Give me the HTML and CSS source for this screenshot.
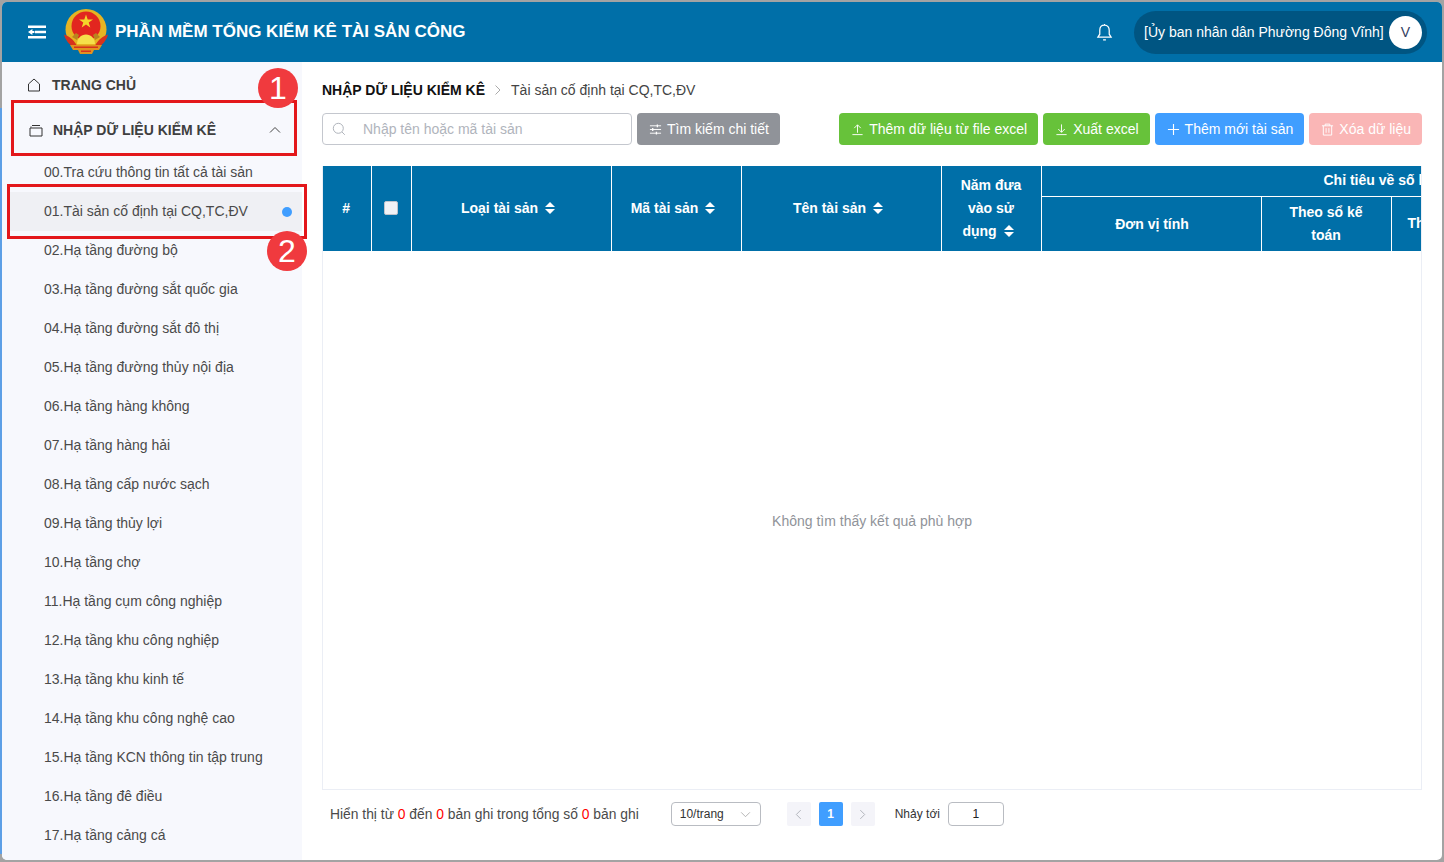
FILE: index.html
```html
<!DOCTYPE html>
<html lang="vi">
<head>
<meta charset="utf-8">
<title>Phần mềm tổng kiểm kê tài sản công</title>
<link rel="stylesheet" href="styles.css">
</head>
<body>
<div class="frame">
  <header class="topbar">
    <svg class="menu-icon" viewBox="0 0 20 16" width="20" height="16"><path d="M1 1.500h18v2.400H1zM8 6.800h11v2.400H8zM1 12.100h18v2.400H1z" fill="#fff"/><path d="M1 8l4.400-3v2h2v2h-2v2z" fill="#fff"/></svg>
    <svg class="emblem" viewBox="0 0 46 46" width="46" height="46">
      <circle cx="23" cy="20.500" r="20.500" fill="#e6b422"/>
      <circle cx="23" cy="17" r="14.500" fill="#e2261f"/>
      <path d="M23 5.500l1.700 5h5.300l-4.300 3.100 1.600 5-4.300-3.100-4.300 3.100 1.600-5-4.300-3.100h5.300z" fill="#f4d52a"/>
      <path d="M1 25.500c5 1.500 9 4.500 13 11l-2 2.500C6.500 36 2.500 31.500 1 25.500zM45 25.500c-5 1.500-9 4.500-13 11l2 2.500c5.500-3 9.500-7.500 11-13.500z" fill="#d8321c"/>
      <path d="M9 28l4-4 3 2-2 5zM37 28l-4-4-3 2 2 5z" fill="#b9851f"/>
      <path d="M14 35c0-5.500 4-9.500 9-9.500s9 4 9 9.500z" fill="#f5e04a"/>
      <path d="M7 36h32l-3 5h-5l-2 4H17l-2-4h-5z" fill="#e0931f"/>
      <path d="M11 37.500h24v1.600H11zM18 41.500h10v1.400H18z" fill="#d8321c"/>
    </svg>
    <div class="brand">PHẦN MỀM TỔNG KIỂM KÊ TÀI SẢN CÔNG</div>
    <svg class="bell" viewBox="0 0 18 20" width="17" height="19"><path d="M9 2.200c-3.300 0-5 2.500-5 5.300v4.300L2 15h14l-2-3.200V7.500c0-2.800-1.700-5.300-5-5.300zM9 1v1.200M7.500 17.800h3" fill="none" stroke="#fff" stroke-width="1.300"/></svg>
    <div class="user-pill">
      <span class="user-name">[Ủy ban nhân dân Phường Đông Vĩnh]</span>
      <span class="avatar">V</span>
    </div>
  </header>

  <div class="body-row">
    <aside class="sidebar">
      <div class="nav-top">
        <svg viewBox="0 0 14 14" width="14" height="14"><path d="M1.500 13V6L7 1l5.500 5v7z" fill="none" stroke="#333" stroke-width="1"/></svg>
        <span>TRANG CHỦ</span>
      </div>
      <div class="nav-group">
        <svg viewBox="0 0 14 14" width="14" height="14"><path d="M1 5h12v8H1zM3 2.500h8M2 4.500V3.500" fill="none" stroke="#333" stroke-width="1"/></svg>
        <span>NHẬP DỮ LIỆU KIỂM KÊ</span>
        <svg class="chev" viewBox="0 0 12 8" width="12" height="8"><path d="M1 6.500l5-5 5 5" fill="none" stroke="#444" stroke-width="1"/></svg>
      </div>
      <ul class="nav-list">
        <li>00.Tra cứu thông tin tất cả tài sản</li>
        <li class="active">01.Tài sản cố định tại CQ,TC,ĐV<i class="dot"></i></li>
        <li>02.Hạ tầng đường bộ</li>
        <li>03.Hạ tầng đường sắt quốc gia</li>
        <li>04.Hạ tầng đường sắt đô thị</li>
        <li>05.Hạ tầng đường thủy nội địa</li>
        <li>06.Hạ tầng hàng không</li>
        <li>07.Hạ tầng hàng hải</li>
        <li>08.Hạ tầng cấp nước sạch</li>
        <li>09.Hạ tầng thủy lợi</li>
        <li>10.Hạ tầng chợ</li>
        <li>11.Hạ tầng cụm công nghiệp</li>
        <li>12.Hạ tầng khu công nghiệp</li>
        <li>13.Hạ tầng khu kinh tế</li>
        <li>14.Hạ tầng khu công nghệ cao</li>
        <li>15.Hạ tầng KCN thông tin tập trung</li>
        <li>16.Hạ tầng đê điều</li>
        <li>17.Hạ tầng cảng cá</li>
      </ul>
    </aside>

    <main class="content">
      <div class="crumbs">
        <b>NHẬP DỮ LIỆU KIỂM KÊ</b>
        <svg viewBox="0 0 8 12" width="8" height="12"><path d="M1.500 1.500L6 6l-4.500 4.500" fill="none" stroke="#aaa" stroke-width="1"/></svg>
        <span>Tài sản cố định tại CQ,TC,ĐV</span>
      </div>

      <div class="toolbar">
        <div class="search">
          <svg viewBox="0 0 14 14" width="14" height="14"><circle cx="6.300" cy="6.300" r="5" fill="none" stroke="#b0b4bc" stroke-width="1"/><path d="M10 10l2.800 2.800" stroke="#b0b4bc" stroke-width="1"/></svg>
          <span>Nhập tên hoặc mã tài sản</span>
        </div>
        <div class="btn btn-grey">
          <svg viewBox="0 0 14 14" width="13" height="13"><path d="M1 3h12M1 7h12M1 11h12" stroke="#fff" stroke-width="1"/><path d="M9 1.500v3M4 5.500v3M8 9.500v3" stroke="#fff" stroke-width="1.400"/></svg>
          Tìm kiếm chi tiết
        </div>
        <div class="spacer"></div>
        <div class="btn btn-green">
          <svg viewBox="0 0 14 14" width="13" height="13"><path d="M7 10.500V2M3.500 5.500L7 2l3.500 3.500M1.500 12.500h11" fill="none" stroke="#fff" stroke-width="1"/></svg>
          Thêm dữ liệu từ file excel
        </div>
        <div class="btn btn-green">
          <svg viewBox="0 0 14 14" width="13" height="13"><path d="M7 1.500V10M3.500 6.500L7 10l3.500-3.500M1.500 12.500h11" fill="none" stroke="#fff" stroke-width="1"/></svg>
          Xuất excel
        </div>
        <div class="btn btn-blue">
          <svg viewBox="0 0 14 14" width="13" height="13"><path d="M7 1v12M1 7h12" stroke="#fff" stroke-width="1.200"/></svg>
          Thêm mới tài sản
        </div>
        <div class="btn btn-red">
          <svg viewBox="0 0 14 14" width="13" height="13"><path d="M1 3h12M4.500 3V1.200h5V3M2.500 3v10h9V3M5.500 5.500v5M8.500 5.500v5" fill="none" stroke="#fff" stroke-width="1"/></svg>
          Xóa dữ liệu
        </div>
      </div>

      <div class="table-box">
        <table class="grid">
          <colgroup>
            <col class="c-num"><col class="c-check"><col class="c-type"><col class="c-code"><col class="c-name"><col class="c-year"><col class="c-unit"><col class="c-book"><col class="c-rest">
          </colgroup>
          <thead>
            <tr class="r1">
              <th rowspan="2">#</th>
              <th rowspan="2"><i class="check"></i></th>
              <th rowspan="2">Loại tài sản<i class="sort"></i></th>
              <th rowspan="2">Mã tài sản<i class="sort"></i></th>
              <th rowspan="2">Tên tài sản<i class="sort"></i></th>
              <th rowspan="2">Năm đưa<br>vào sử<br>dụng<i class="sort"></i></th>
              <th colspan="3" class="group">Chỉ tiêu về số lượng</th>
            </tr>
            <tr class="r2">
              <th class="unit">Đơn vị tính</th>
              <th>Theo sổ kế<br>toán</th>
              <th>Theo kiểm kê</th>
            </tr>
          </thead>
        </table>
        <div class="empty">Không tìm thấy kết quả phù hợp</div>
      </div>

      <div class="pager">
        <span class="summary">Hiển thị từ <em>0</em> đến <em>0</em> bản ghi trong tổng số <em>0</em> bản ghi</span>
        <div class="size">10/trang
          <svg viewBox="0 0 12 8" width="11" height="7"><path d="M1 1.500l5 5 5-5" fill="none" stroke="#aaa" stroke-width="1"/></svg>
        </div>
        <div class="pages">
          <span class="page nav"><svg viewBox="0 0 8 12" width="7" height="11"><path d="M6.500 1L1.500 6l5 5" fill="none" stroke="#a8abb2" stroke-width="1"/></svg></span>
          <span class="page current">1</span>
          <span class="page nav"><svg viewBox="0 0 8 12" width="7" height="11"><path d="M1.500 1l5 5-5 5" fill="none" stroke="#a8abb2" stroke-width="1"/></svg></span>
        </div>
        <span class="jump-label">Nhảy tới</span>
        <div class="jump">1</div>
      </div>
    </main>
  </div>

  <div class="edge"></div>
  <div class="mark mark-one"></div>
  <div class="mark mark-two"></div>
  <div class="badge badge-one">1</div>
  <div class="badge badge-two">2</div>
</div>
</body>
</html>
```
FILE: styles.css
```css
* { box-sizing: border-box; }
html, body { margin: 0; height: 100%; overflow: hidden; background: #a3a3a3; }
body { font-family: "Liberation Sans", Arial, sans-serif; font-size: 14px; color: #4a4a4a; }

.frame {
  position: relative;
  width: 1444px;
  height: 862px;
  display: flex;
  flex-direction: column;
  border: 2px solid #a3a3a3;
  border-radius: 7px;
  background: #fff;
}

.edge {
  position: absolute;
  left: -2px;
  top: 106px;
  bottom: 6px;
  width: 2px;
  background: #5d9fe6;
}

.topbar {
  flex: none;
  height: 60px;
  display: flex;
  align-items: center;
  background: #006fa8;
  padding: 0 15px 0 25px;
  color: #fff;
  border-radius: 5px 5px 0 0;
}
.menu-icon { flex: none; }
.emblem { flex: none; margin-left: 16px; margin-top: 0; }
.brand { margin-left: 6px; font-size: 17px; font-weight: bold; white-space: nowrap; }
.bell { margin-left: auto; flex: none; }
.user-pill {
  margin-left: 21px;
  width: 293px;
  height: 43px;
  border-radius: 22px;
  background: #005582;
  display: flex;
  align-items: center;
  justify-content: space-between;
  padding: 0 5px 0 10px;
  font-size: 14px;
  white-space: nowrap;
}
.avatar {
  width: 33px;
  height: 33px;
  border-radius: 50%;
  background: #fff;
  color: #34405f;
  display: flex;
  align-items: center;
  justify-content: center;
}

.body-row { flex: 1; display: flex; min-height: 0; }

.sidebar {
  flex: none;
  width: 300px;
  background: #f7f8fd;
  overflow: hidden;
  border-radius: 0 0 0 5px;
}
.nav-top, .nav-group {
  display: flex;
  align-items: center;
  font-weight: bold;
  font-size: 14px;
  color: #3f3f3f;
  white-space: nowrap;
}
.nav-top { height: 46px; padding: 0 0 0 25px; gap: 11px; }
.nav-group { height: 45px; padding: 0 21px 1px 27px; gap: 10px; }
.chev { margin-left: auto; }

.nav-list { list-style: none; margin: 0; padding: 0; }
.nav-list li {
  position: relative;
  height: 39px;
  line-height: 39px;
  padding-left: 42px;
  font-size: 14px;
  color: #4a4a4a;
  white-space: nowrap;
}
.nav-list li.active { background: #eff0f4; margin-left: 6px; padding-left: 36px; }
.dot {
  position: absolute;
  right: 10px;
  top: 15px;
  width: 10px;
  height: 10px;
  border-radius: 50%;
  background: #409eff;
}

.content { flex: 1; min-width: 0; padding: 0 20px 0 20px; display: flex; flex-direction: column; }

.crumbs {
  height: 28px;
  margin-top: 14px;
  display: flex;
  align-items: center;
  gap: 9px;
  font-size: 14px;
  color: #444;
  white-space: nowrap;
}
.crumbs b { color: #111; }

.toolbar { margin-top: 9px; height: 32px; display: flex; gap: 5px; }
.spacer { flex: 1; }
.search {
  width: 310px;
  border: 1px solid #c4c7ce;
  border-radius: 4px;
  display: flex;
  align-items: center;
  padding-left: 9px;
  gap: 17px;
  color: #b0b4bc;
  background: #fff;
}
.btn {
  display: flex;
  align-items: center;
  gap: 5px;
  padding: 0 11px 0 12px;
  border-radius: 4px;
  color: #fff;
  white-space: nowrap;
}
.btn-grey { background: #909399; }
.btn-green { background: #67c23a; }
.btn-blue { background: #409eff; }
.btn-red { background: #fab6b6; }

.table-box {
  margin-top: 21px;
  height: 624px;
  width: 1100px;
  display: flex;
  flex-direction: column;
  border-right: 1px solid #ebeef5;
  border-bottom: 1px solid #ebeef5;
  border-left: 1px solid #ebeef5;
  overflow: hidden;
}
.grid {
  table-layout: fixed;
  border-collapse: collapse;
  width: 1399px;
  flex: none;
  margin-left: -1px;
}
.c-num { width: 49px; }
.c-check { width: 40px; }
.c-type { width: 200px; }
.c-code { width: 130px; }
.c-name { width: 200px; }
.c-year { width: 100px; }
.c-unit { width: 220px; }
.c-book { width: 130px; }
.c-rest { width: 330px; }
.grid th {
  background: #006fa8;
  color: #fff;
  font-size: 14px;
  line-height: 23px;
  font-weight: bold;
  text-align: center;
  border-right: 1px solid #fff;
  border-bottom: 1px solid #fff;
  padding: 0;
  white-space: nowrap;
  overflow: hidden;
}
.r1 { height: 30px; }
.r2 { height: 55px; }
.r2 th { border-bottom: 0; }
.grid th[rowspan] { border-bottom: 0; }
.grid .group { text-align: left; padding-left: 282px; }
.r2 th:last-child { text-align: left; padding-left: 16px; }
.grid .unit { padding: 2px 0 0 2px; }

.check {
  display: inline-block;
  width: 14px;
  height: 14px;
  vertical-align: -2px;
  background: #f1f2f6;
  border: 1px solid #c0c4cc;
  border-radius: 2px;
}
.sort {
  display: inline-block;
  position: relative;
  width: 10px;
  height: 12px;
  margin-left: 7px;
  margin-right: 6px;
  vertical-align: -1px;
}
.sort::before, .sort::after {
  content: "";
  position: absolute;
  left: 0;
  border-left: 5px solid transparent;
  border-right: 5px solid transparent;
}
.sort::before { top: 0; border-bottom: 5px solid #fff; }
.sort::after { bottom: 0; border-top: 5px solid #fff; }

.empty {
  flex: 1;
  display: flex;
  align-items: center;
  justify-content: center;
  color: #909399;
  font-size: 14px;
  padding-top: 2px;
}

.pager {
  height: 48px;
  padding-left: 8px;
  display: flex;
  align-items: center;
  font-size: 13.850px;
  color: #4a4a4a;
  white-space: nowrap;
}
.summary em { font-style: normal; color: #f00; }
.size {
  margin-left: 32px;
  width: 90px;
  height: 24px;
  border: 1px solid #b9bcc2;
  border-radius: 4px;
  display: flex;
  align-items: center;
  justify-content: space-between;
  padding: 0 9px 0 8px;
  font-size: 12px;
  color: #333;
}
.pages { margin-left: 26px; display: flex; gap: 8px; }
.page {
  width: 24px;
  height: 24px;
  border-radius: 2px;
  display: flex;
  align-items: center;
  justify-content: center;
  font-size: 12px;
  font-weight: bold;
}
.page.nav { background: #f4f4f9; }
.page.current { background: #409eff; color: #fff; }
.jump-label { margin-left: 20px; font-size: 12px; color: #333; }
.jump {
  margin-left: 8px;
  width: 56px;
  height: 24px;
  border: 1px solid #b9bcc2;
  border-radius: 4px;
  display: flex;
  align-items: center;
  justify-content: center;
  font-size: 12px;
  color: #222;
}

.mark { position: absolute; border: 3px solid #e3171b; pointer-events: none; }
.mark-one { left: 9px; top: 98px; width: 286px; height: 56px; }
.mark-two { left: 5px; top: 182px; width: 300px; height: 55px; }
.badge {
  position: absolute;
  width: 40px;
  height: 40px;
  border-radius: 50%;
  background: #f03a3e;
  color: #fff;
  display: flex;
  align-items: center;
  justify-content: center;
  font-size: 32px;
}
.badge-one { left: 256px; top: 66px; }
.badge-two { left: 265px; top: 229px; }
```
